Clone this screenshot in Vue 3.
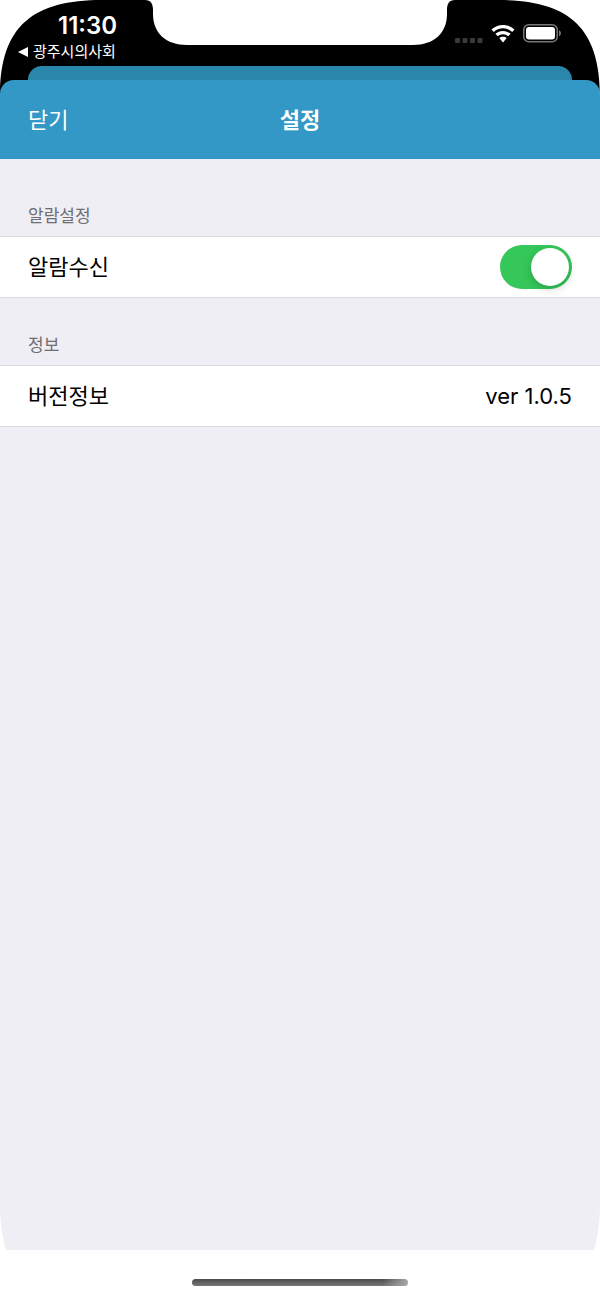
<script setup>
import { ref } from 'vue'

const alarmOn = ref(true)
const version = 'ver 1.0.5'
</script>

<template>
  <div class="phone">
    <div class="top">
      <svg class="corner left" viewBox="0 0 102 96" aria-hidden="true">
        <path d="M0 0H102C34 0 0 25 0 96Z" />
      </svg>
      <svg class="corner right" viewBox="0 0 102 96" aria-hidden="true">
        <path d="M102 0H0C68 0 102 25 102 96Z" />
      </svg>

      <div class="status">
        <div class="status-left">
          <time class="clock">11:30</time>
          <a class="back" href="#">
            <svg class="back-arrow" viewBox="0 0 10 10" aria-hidden="true"><path d="M0 5L10 0V10Z" /></svg>
            <span>광주시의사회</span>
          </a>
        </div>
        <svg class="notch" viewBox="0 0 310 46" aria-hidden="true">
          <path d="M0 0H310C304 0 302 4 302 10V14C302 33 289 45 268 45H42C21 45 8 33 8 14V10C8 4 6 0 0 0Z" />
        </svg>
        <div class="status-right">
          <svg class="dots" viewBox="0 0 28 5" aria-label="신호 없음">
            <rect width="5" height="5" rx="1" />
            <rect x="7.5" width="5" height="5" rx="1" />
            <rect x="15" width="5" height="5" rx="1" />
            <rect x="22.5" width="5" height="5" rx="1" />
          </svg>
          <svg class="wifi" viewBox="0 0 24 18" aria-label="Wi-Fi">
            <path d="M12 0C16.500 0 20.700 1.800 23.500 4.600L21.200 7C18.700 4.600 15.500 3.300 12 3.300S5.300 4.600 2.800 7L.5 4.600C3.300 1.800 7.500 0 12 0Z" />
            <path d="M12 5.900C15 5.900 17.600 7 19.600 8.800L17.200 11.200C15.800 9.900 14 9.200 12 9.200S8.200 9.900 6.800 11.200L4.400 8.800C6.400 7 9 5.900 12 5.900Z" />
            <path d="M12 11.700C13.400 11.700 14.700 12.200 15.700 13.100L12 17.600L8.300 13.100C9.300 12.200 10.600 11.700 12 11.700Z" />
          </svg>
          <svg class="battery" viewBox="0 0 39 19" aria-label="배터리">
            <rect class="shell" x=".75" y=".75" width="33.500" height="17" rx="5" />
            <rect x="3" y="3" width="29" height="12.500" rx="3" />
            <path class="tip" d="M36 6.200C38.600 7.200 38.600 11.300 36 12.300Z" />
          </svg>
        </div>
      </div>

      <div class="behind"></div>
      <header class="bar">
        <button class="close" type="button">닫기</button>
        <h1>설정</h1>
      </header>
    </div>

    <main>
      <section>
        <h2>알람설정</h2>
        <div class="row">
          <label for="alarm">알람수신</label>
          <input id="alarm" v-model="alarmOn" class="switch" type="checkbox" role="switch" />
        </div>
      </section>
      <section>
        <h2>정보</h2>
        <div class="row">
          <span>버전정보</span>
          <span class="version">{{ version }}</span>
        </div>
      </section>
    </main>

    <footer><div class="home"></div></footer>
  </div>
</template>

<style>
body {
  background: #fff;
}
</style>

<style scoped>
.phone {
  display: flex;
  flex-direction: column;
  min-height: 100vh;
  overflow: hidden;
  border-radius: 0 0 50px 50px / 0 0 92px 92px;
  background: #fff;
  color: #000;
  font-family: Inter, "Noto Sans CJK KR", sans-serif;
}

.top {
  position: relative;
  background: #000;
}

.corner {
  position: absolute;
  z-index: 1;
  top: 0;
  width: 102px;
  height: 96px;
  fill: #fff;
  pointer-events: none;
}

.left {
  left: 0;
}

.right {
  right: 0;
}

.status {
  display: grid;
  grid-template-columns: minmax(0, 1fr) 310px minmax(0, 1fr);
  height: 66px;
  color: #fff;
}

.status-left {
  display: flex;
  flex-direction: column;
  padding: 12px 0 0 18px;
  white-space: nowrap;
}

.clock {
  padding-left: 40px;
  font-size: 24px;
  font-weight: 600;
  line-height: 28px;
}

.back {
  display: flex;
  align-items: center;
  gap: 5px;
  color: #fff;
  font-size: 15px;
  line-height: 24px;
  text-decoration: none;
}

.back-arrow {
  width: 10px;
  height: 10px;
  fill: #fff;
}

.notch {
  width: 310px;
  height: 46px;
  fill: #fff;
}

.status-right {
  display: flex;
  justify-content: flex-end;
  align-items: flex-end;
  gap: 8px;
  height: 43px;
  padding-right: 38px;
}

.status-right svg {
  flex: none;
}

.dots {
  width: 28px;
  height: 5px;
  fill: #3a3a3a;
}

.wifi {
  width: 24px;
  height: 18px;
  fill: #fff;
}

.battery {
  width: 39px;
  height: 19px;
  fill: #fff;
}

.shell {
  fill: none;
  stroke: #777;
  stroke-width: 1.5;
}

.tip {
  fill: #777;
}

.behind {
  height: 14px;
  margin: 0 28px;
  border-radius: 14px 14px 0 0;
  background: #2b86ac;
}

.bar {
  display: grid;
  grid-template-columns: 1fr auto 1fr;
  align-items: center;
  height: 79px;
  padding: 0 28px;
  border-radius: 14px 14px 0 0;
  background: #3398c5;
  color: #fff;
}

.close {
  justify-self: start;
  padding: 0;
  border: 0;
  background: none;
  color: inherit;
  font: inherit;
  font-size: 22px;
  line-height: 32px;
}

h1 {
  margin: 0;
  font-size: 22px;
  font-weight: 600;
  line-height: 32px;
}

main {
  flex: 1;
  background: #efeef4;
}

h2 {
  margin: 0;
  padding: 31px 28px 4px;
  color: #6d6d72;
  font-size: 17px;
  font-weight: 400;
  line-height: 32px;
}

section:first-child h2 {
  padding-top: 41px;
}

.row {
  display: flex;
  justify-content: space-between;
  align-items: center;
  height: 60px;
  padding: 0 28px;
  border: solid #dcdce0;
  border-width: 1px 0;
  background: #fff;
  font-size: 22px;
  line-height: 32px;
}

.switch {
  appearance: none;
  display: flex;
  align-items: center;
  width: 72px;
  height: 44px;
  margin: 0;
  padding: 3px;
  box-sizing: border-box;
  border-radius: 22px;
  background: #d8d8dc;
}

.switch::before {
  content: "";
  width: 38px;
  height: 38px;
  border-radius: 50%;
  background: #fff;
  box-shadow: 0 3px 8px rgba(0, 0, 0, 0.2);
}

.switch:checked {
  justify-content: flex-end;
  background: #35c759;
}

footer {
  display: flex;
  justify-content: center;
  align-items: flex-end;
  height: 48px;
  padding-bottom: 12px;
  box-sizing: border-box;
  background: #fff;
}

.home {
  width: 36%;
  height: 7px;
  border-radius: 4px;
  background: linear-gradient(100deg, transparent 88%, #aaa), linear-gradient(#4c4c4c, #777);
}
</style>
